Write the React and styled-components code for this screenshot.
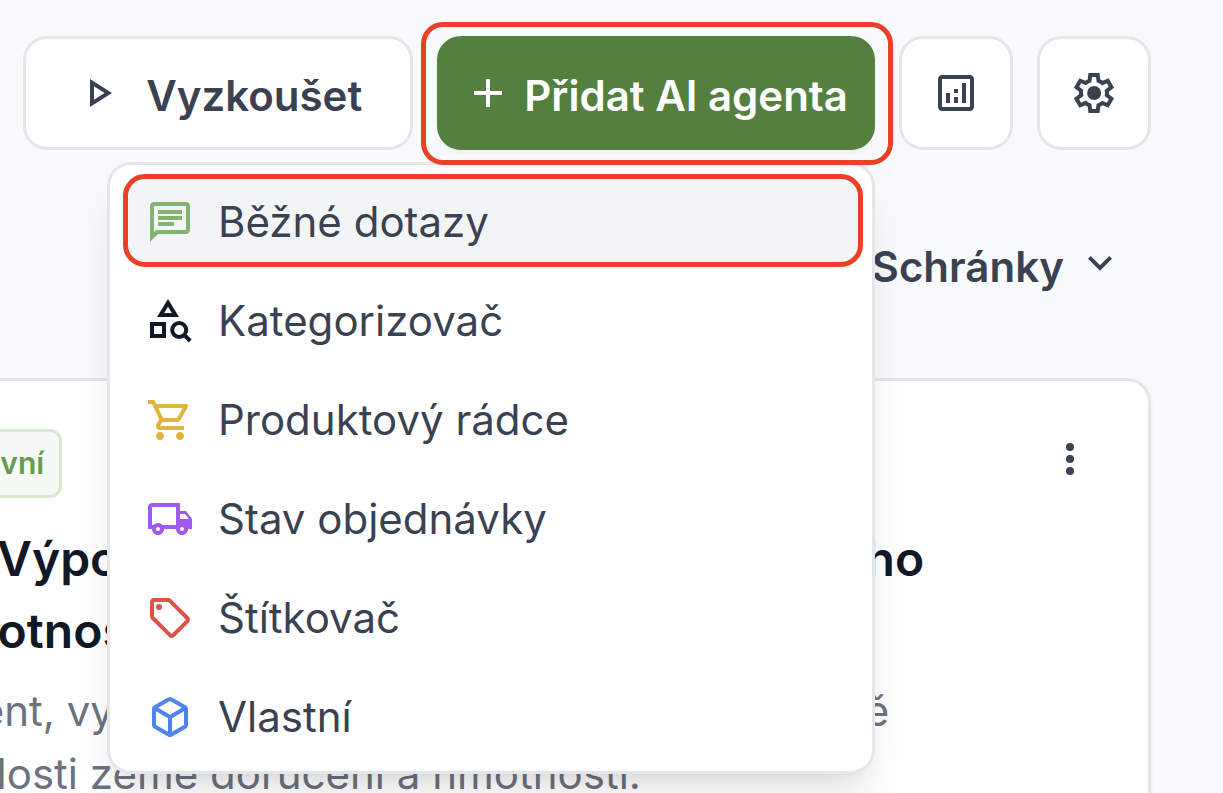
import React from "react";
import styled, { createGlobalStyle, css } from "styled-components";
import {
  MdAdd,
  MdOutlineAnalytics,
  MdOutlineChat,
  MdOutlineLocalShipping,
  MdOutlinePlayArrow,
  MdOutlineSell,
  MdOutlineShoppingCart,
} from "react-icons/md";

const color = {
  page: "#f9fafc",
  surface: "#ffffff",
  line: "#e5e6ea",
  text: "#3a4252",
  heading: "#131826",
  muted: "#6c7280",
  hover: "#f3f4f6",
  green: "#54803f",
  mark: "#eb4025",
};

const GlobalStyle = createGlobalStyle`
  *, *::before, *::after { box-sizing: border-box; }
  body {
    margin: 0;
    background: ${color.page};
    color: ${color.text};
    font-family: Inter, "Liberation Sans", sans-serif;
    font-size: 42px;
    line-height: 60px;
  }
  button { font: inherit; color: inherit; cursor: pointer; }
`;

const Page = styled.div`
  display: flex;
  flex-direction: column;
  height: 100vh;
  overflow: hidden;
  padding: 36px 72px 0 0;
`;

const Toolbar = styled.header`
  position: relative;
  z-index: 2;
  display: flex;
  justify-content: flex-end;
  gap: 24px;
`;

const FilterBar = styled.div`
  display: flex;
  justify-content: flex-end;
  margin: 57px 0;
`;

const variants = {
  outline: css`
    background: ${color.surface};
    border-color: ${color.line};
  `,
  primary: css`
    background: ${color.green};
    border-color: ${color.green};
    color: #ffffff;
    box-shadow: 0 3px 6px rgba(0, 0, 0, 0.05);
  `,
  ghost: css`
    background: transparent;
    border-color: transparent;
  `,
};

const Button = styled.button`
  display: flex;
  flex: none;
  align-items: center;
  justify-content: center;
  gap: ${(p) => p.$gap || 12}px;
  height: 114px;
  padding: 0 ${(p) => p.$pad || 24}px;
  border: 3px solid;
  border-radius: 24px;
  font-weight: 600;
  white-space: nowrap;
  ${(p) => variants[p.$variant || "outline"]}
`;

const IconButton = styled(Button)`
  width: 114px;
  padding: 0;
`;

const ButtonLabel = styled.span`
  padding-top: 6px;
`;

const Icon = styled.svg`
  flex: none;
  width: 48px;
  height: 48px;
  fill: currentColor;
`;

const MenuAnchor = styled.div`
  position: relative;
`;

const mark = css`
  content: "";
  position: absolute;
  border: 5px solid ${color.mark};
  border-radius: 22px;
  pointer-events: none;
`;

const MarkedAnchor = styled(MenuAnchor)`
  &::after {
    ${mark}
    z-index: 3;
    inset: -14px -18px -15px -16px;
  }
`;

const Menu = styled.div`
  position: absolute;
  top: calc(100% + 12px);
  right: 0;
  display: flex;
  flex-direction: column;
  gap: 6px;
  width: 768px;
  padding: 9px 9px 9px 13px;
  background: ${color.surface};
  border: 3px solid ${color.line};
  border-radius: 24px;
  box-shadow: 0 30px 45px -9px rgba(0, 0, 0, 0.1), 0 12px 18px -12px rgba(0, 0, 0, 0.1);
`;

const MenuItem = styled.button`
  position: relative;
  display: flex;
  align-items: center;
  gap: 24px;
  height: 93px;
  padding: 3px 23px 0;
  background: ${(p) => (p.$active ? color.hover : "transparent")};
  border: 0;
  border-radius: 22px;
  text-align: left;

  ${(p) =>
    p.$active &&
    css`
      &::after {
        ${mark}
        inset: 0;
      }
    `}
`;

const ItemIcon = styled.span`
  display: flex;
  color: ${(p) => p.$color};
`;

const Card = styled.article`
  flex: none;
  margin-left: -126px;
  padding: 48px;
  background: ${color.surface};
  border: 3px solid ${color.line};
  border-radius: 24px;
  box-shadow: 0 3px 6px rgba(0, 0, 0, 0.05);
`;

const CardTop = styled.div`
  display: flex;
  align-items: flex-start;
  justify-content: space-between;
`;

const Badge = styled.span`
  padding: 9px 15px;
  background: #f5faf4;
  border: 3px solid #d6e8cf;
  border-radius: 12px;
  color: #669c50;
  font-size: 30px;
  font-weight: 600;
  line-height: 45px;
`;

const MoreButton = styled.button`
  display: flex;
  align-items: center;
  justify-content: center;
  width: 60px;
  height: 60px;
  padding: 0;
  background: none;
  border: 0;
`;

const Title = styled.h2`
  margin: 25px 0 12px;
  color: ${color.heading};
  font-size: 48px;
  font-weight: 600;
  line-height: 72px;
  white-space: nowrap;

  svg {
    margin-right: 24px;
    vertical-align: middle;
  }
`;

const Description = styled.p`
  margin: 0;
  color: ${color.muted};
  line-height: 63px;
  white-space: nowrap;
`;

const Glyph = ({ children, ...rest }) => (
  <Icon viewBox="0 0 24 24" aria-hidden="true" {...rest}>
    {children}
  </Icon>
);

const SettingsIcon = () => (
  <Glyph>
    <path
      fillRule="evenodd"
      d="m9.25 22-.4-3.2q-.325-.125-.612-.3-.288-.175-.563-.375L4.7 19.375l-2.75-4.75 2.575-1.95Q4.5 12.5 4.5 12.338v-.675q0-.163.025-.338L1.95 9.375l2.75-4.75 2.975 1.25q.275-.2.575-.375.3-.175.6-.3l.4-3.2h5.5l.4 3.2q.325.125.613.3.287.175.562.375l2.975-1.25 2.75 4.75-2.575 1.95q.025.175.025.338v.674q0 .163-.05.338l2.575 1.95-2.75 4.75-2.95-1.25q-.275.2-.575.375-.3.175-.6.3l-.4 3.2h-5.5ZM11 20h1.975l.35-2.65q.775-.2 1.438-.588.662-.387 1.212-.937l2.475 1.025.975-1.7-2.15-1.625q.125-.35.175-.738.05-.387.05-.787t-.05-.788q-.05-.387-.175-.737l2.15-1.625-.975-1.7-2.475 1.05q-.55-.575-1.212-.963-.663-.387-1.438-.587L13 4h-1.975l-.35 2.65q-.775.2-1.437.587-.663.388-1.213.938L5.55 7.15l-.975 1.7 2.15 1.6q-.125.375-.175.75-.05.375-.05.8 0 .4.05.775t.175.75l-2.15 1.625.975 1.7 2.475-1.05q.55.575 1.213.962.662.388 1.437.588L11 20Z"
    />
    <circle cx="12.05" cy="12" r="3.5" />
  </Glyph>
);

const ChevronIcon = () => (
  <Glyph>
    <path d="m12 15.375-6-6 1.4-1.4 4.6 4.6 4.6-4.6 1.4 1.4-6 6Z" />
  </Glyph>
);

const CategorySearchIcon = () => (
  <Glyph>
    <path d="M5.5 10 11 1l5.5 9h-11Zm3.55-2h3.9L11 4.85 9.05 8Z" fillRule="evenodd" />
    <path d="M2 12.5h8v8H2v-8Zm2 2v4h4v-4H4Z" fillRule="evenodd" />
    <path d="M19.1 18.9 22.1 22" fill="none" stroke="currentColor" strokeWidth="2" />
    <circle cx="16.6" cy="16.5" r="3.5" fill="none" stroke="currentColor" strokeWidth="2" />
  </Glyph>
);

const BoxIcon = () => (
  <Glyph>
    <path d="M11 19.425v-6.85L5 9.1v6.85l6 3.475Zm2 0 6-3.475V9.1l-6 3.475v6.85Zm-1-8.575 5.925-3.425L12 4 6.075 7.425 12 10.85ZM4 17.7q-.475-.275-.738-.725T3 15.975v-7.95q0-.55.263-1T4 6.3l7-4.025Q11.475 2 12 2t1 .275L20 6.3q.475.275.738.725t.262 1v7.95q0 .55-.262 1T20 17.7l-7 4.025Q12.525 22 12 22t-1-.275L4 17.7Z" />
  </Glyph>
);

const MoreIcon = () => (
  <Glyph>
    <circle cx="12" cy="6" r="2" />
    <circle cx="12" cy="12" r="2" />
    <circle cx="12" cy="18" r="2" />
  </Glyph>
);

const agents = [
  { label: "Běžné dotazy", icon: <Icon as={MdOutlineChat} />, color: "#82b36f", active: true },
  { label: "Kategorizovač", icon: <CategorySearchIcon />, color: "#131826" },
  { label: "Produktový rádce", icon: <Icon as={MdOutlineShoppingCart} />, color: "#e2b33c" },
  { label: "Stav objednávky", icon: <Icon as={MdOutlineLocalShipping} />, color: "#9f5bf0" },
  { label: "Štítkovač", icon: <Icon as={MdOutlineSell} />, color: "#de524c" },
  { label: "Vlastní", icon: <BoxIcon />, color: "#4f83f0" },
];

export default function App() {
  return (
    <>
      <GlobalStyle />
      <Page>
        <Toolbar>
          <Button type="button" $gap={24} $pad={48}>
            <Icon as={MdOutlinePlayArrow} />
            <ButtonLabel>Vyzkoušet</ButtonLabel>
          </Button>
          <MarkedAnchor>
            <Button type="button" $variant="primary" aria-haspopup="menu" aria-expanded="true">
              <Icon as={MdAdd} />
              <ButtonLabel>Přidat AI agenta</ButtonLabel>
            </Button>
            <Menu role="menu">
              {agents.map((agent) => (
                <MenuItem key={agent.label} type="button" role="menuitem" $active={agent.active}>
                  <ItemIcon $color={agent.color}>{agent.icon}</ItemIcon>
                  {agent.label}
                </MenuItem>
              ))}
            </Menu>
          </MarkedAnchor>
          <IconButton type="button" aria-label="Statistiky">
            <Icon as={MdOutlineAnalytics} />
          </IconButton>
          <IconButton type="button" aria-label="Nastavení">
            <SettingsIcon />
          </IconButton>
        </Toolbar>

        <FilterBar>
          <Button type="button" $variant="ghost">
            <ButtonLabel>Schránky</ButtonLabel>
            <ChevronIcon />
          </Button>
        </FilterBar>

        <Card>
          <CardTop>
            <Badge>Aktivní</Badge>
            <MoreButton type="button" aria-label="Další možnosti">
              <MoreIcon />
            </MoreButton>
          </CardTop>
          <Title>
            <BoxIcon />
            Výpočet ceny dopravy podle vybraného
            <br />
            hmotnosti
          </Title>
          <Description>
            Agent, vypočítá cenu dopravy pro klienta přesně
            <br />
            znalosti země doručení a hmotnosti.
          </Description>
        </Card>
      </Page>
    </>
  );
}
